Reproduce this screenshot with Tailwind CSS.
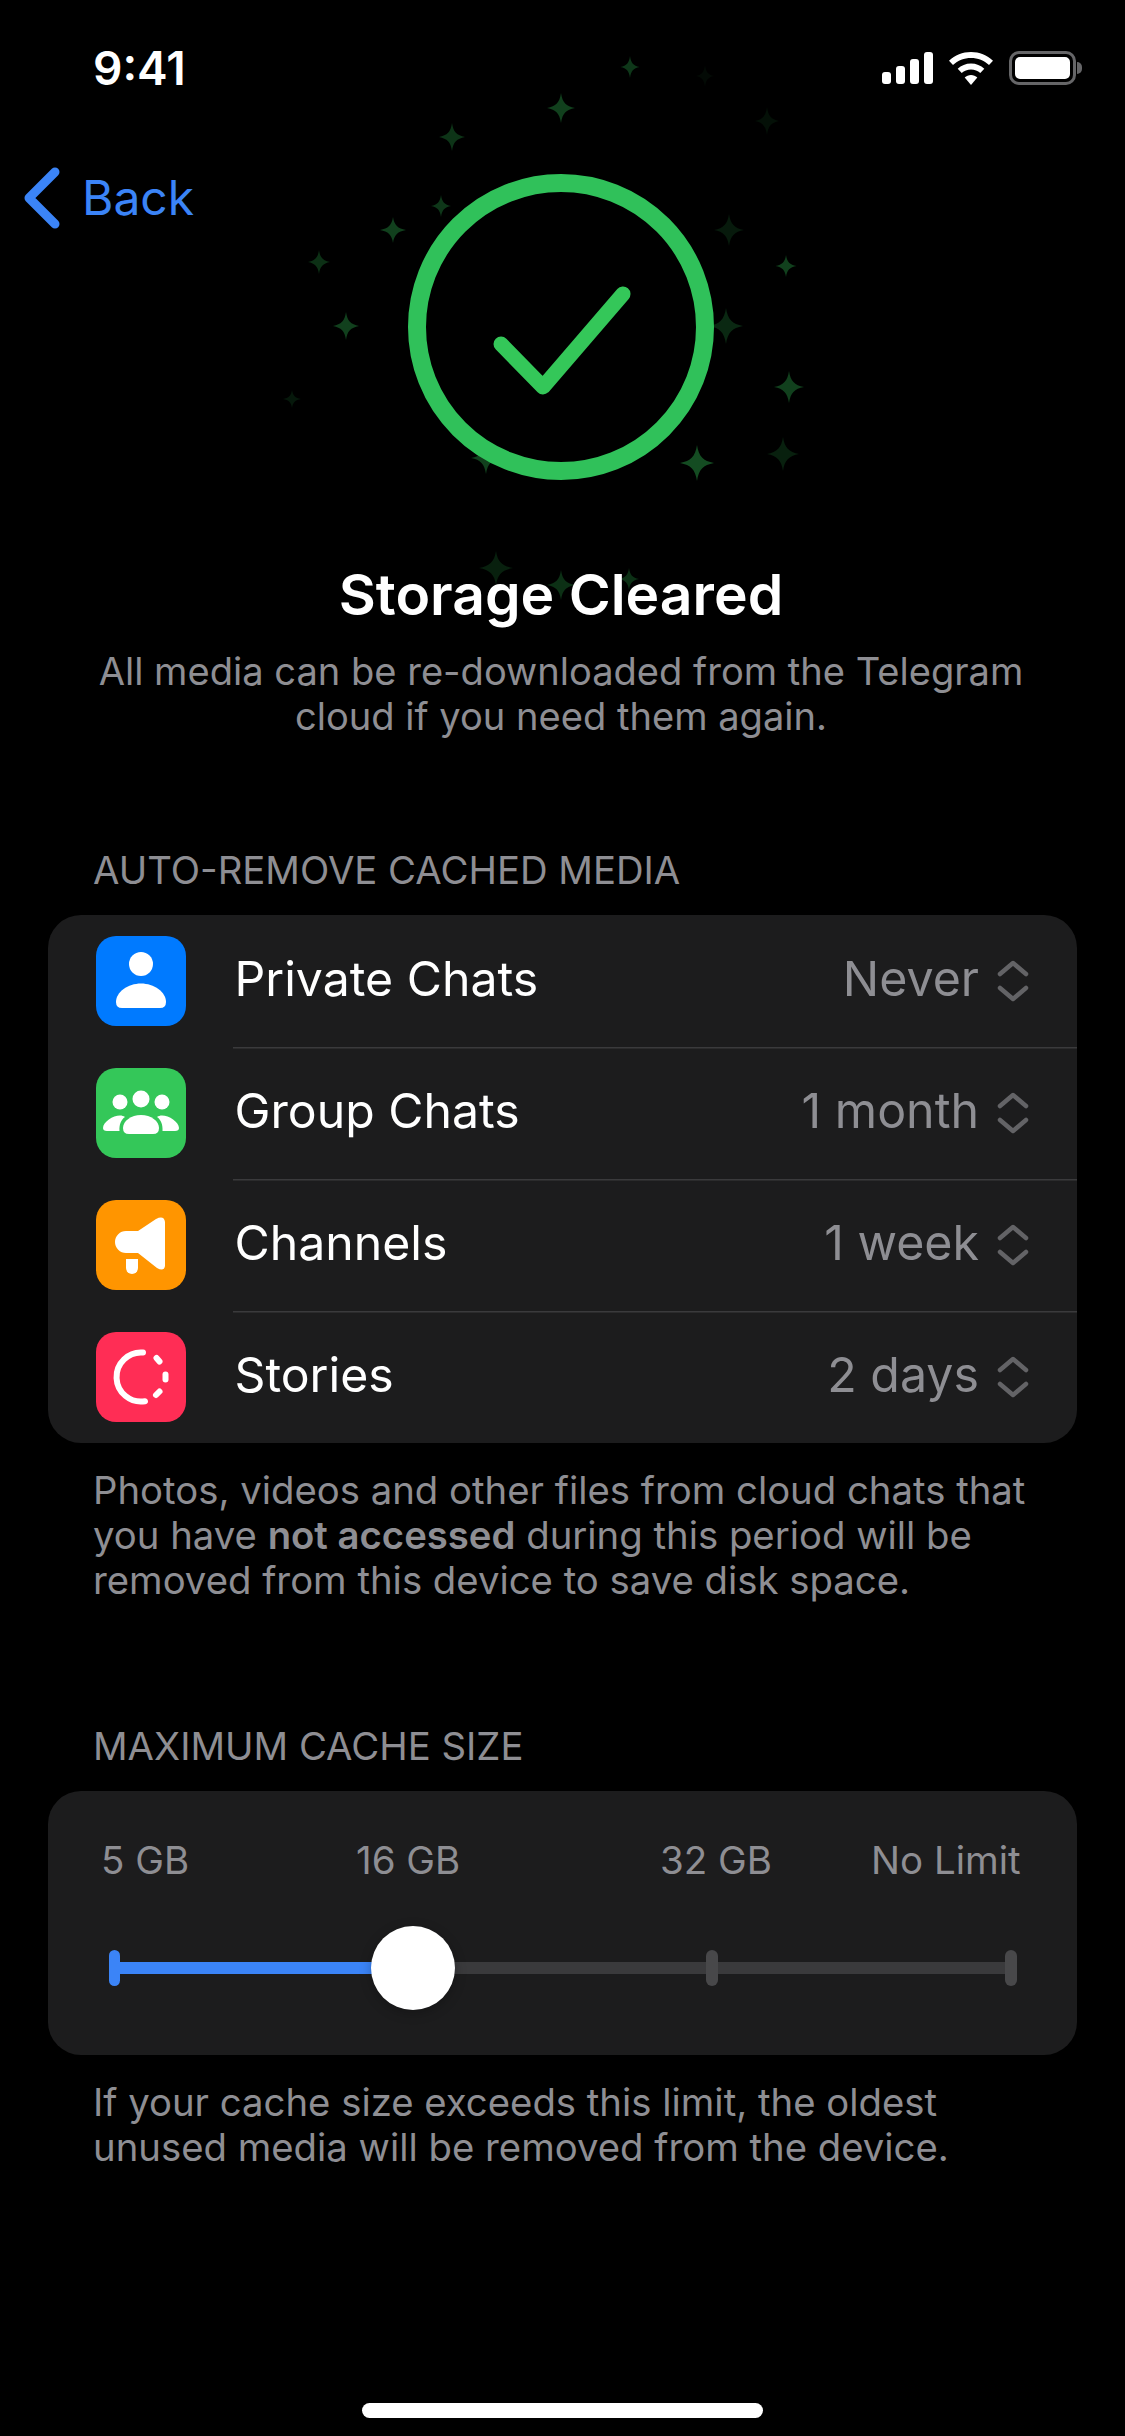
<!DOCTYPE html>
<html lang="en">
  <head>
    <meta charset="UTF-8" />
    <meta name="viewport" content="width=device-width, initial-scale=1.0" />
    <title>Storage Cleared</title>
    <script src="https://cdn.jsdelivr.net/npm/@tailwindcss/browser@4"></script>
  </head>
  <body class="bg-black text-white font-['Inter',sans-serif] w-[1125px] h-[2436px] overflow-hidden">
    <div class="relative flex flex-col h-[2436px]">
      <!-- stars and ring sit behind the header -->
      <svg class="absolute left-0 top-0" width="1125" height="640" viewBox="0 0 1125 640">
        <defs>
          <path id="star" d="M0 -1 C.1 -.36 .36 -.12 1 0 C.36 .12 .1 .36 0 1 C-.1 .36 -.36 .12 -1 0 C-.36 -.12 -.1 -.36 0 -1Z" />
        </defs>
        <g fill="#34c759">
          <use href="#star" transform="translate(630 67) scale(9.5 11)" opacity=".28" />
          <use href="#star" transform="translate(705 76) scale(9 11)" opacity=".05" />
          <use href="#star" transform="translate(561 108) scale(14 15)" opacity=".32" />
          <use href="#star" transform="translate(767 121) scale(12 14)" opacity=".08" />
          <use href="#star" transform="translate(452 137) scale(13 14)" opacity=".26" />
          <use href="#star" transform="translate(441 206) scale(10 11)" opacity=".28" />
          <use href="#star" transform="translate(393 230) scale(13 13)" opacity=".32" />
          <use href="#star" transform="translate(729 230) scale(15 16)" opacity=".13" />
          <use href="#star" transform="translate(319 262) scale(11 12)" opacity=".24" />
          <use href="#star" transform="translate(786 266) scale(10.5 11)" opacity=".32" />
          <use href="#star" transform="translate(346 326) scale(13 14)" opacity=".32" />
          <use href="#star" transform="translate(726 326) scale(17 18)" opacity=".2" />
          <use href="#star" transform="translate(292 399) scale(9 9)" opacity=".12" />
          <use href="#star" transform="translate(789 387) scale(15 16)" opacity=".32" />
          <use href="#star" transform="translate(783 454) scale(16 17)" opacity=".16" />
          <use href="#star" transform="translate(697 463) scale(17 18)" opacity=".38" />
          <use href="#star" transform="translate(486 458) scale(15 16)" opacity=".32" />
          <use href="#star" transform="translate(496 568) scale(17 17)" opacity=".16" />
          <use href="#star" transform="translate(561 585) scale(14 15)" opacity=".24" />
          <use href="#star" transform="translate(629 579) scale(10 11)" opacity=".24" />
        </g>
        <circle cx="561" cy="327" r="144" fill="#000" stroke="#30c15a" stroke-width="18" />
        <path d="M501 344 L543 387 L623 294" fill="none" stroke="#34c759" stroke-width="15" stroke-linecap="round" stroke-linejoin="round" />
      </svg>

      <div class="relative flex items-center justify-between h-[136px] pl-[93px] pr-[43px]">
        <span class="text-[46px] font-semibold leading-none">9:41</span>
        <div class="flex items-center gap-[16px]">
          <svg width="51" height="32" viewBox="0 0 51 32" fill="#fff">
            <rect x="0" y="20" width="9" height="12" rx="3" />
            <rect x="14" y="14" width="9" height="18" rx="3" />
            <rect x="28" y="7" width="9" height="25" rx="3" />
            <rect x="42" y="0" width="9" height="32" rx="3" />
          </svg>
          <svg width="44" height="33" viewBox="0 0 44 33" fill="#fff">
            <path d="M22 0 C30.500 0 38 3.200 44 8.800 L40 13 C35.200 8.600 28.900 6 22 6 C15.100 6 8.800 8.600 4 13 L0 8.800 C6 3.200 13.500 0 22 0Z" />
            <path d="M22 11.500 C27.200 11.500 31.800 13.500 35.300 16.800 L31.300 21 C28.800 18.700 25.600 17.400 22 17.400 C18.400 17.400 15.200 18.700 12.700 21 L8.700 16.800 C12.200 13.500 16.800 11.500 22 11.500Z" />
            <path d="M22 23 C24.400 23 26.600 23.900 28.300 25.500 L22 33 L15.700 25.500 C17.400 23.900 19.600 23 22 23Z" />
          </svg>
          <div class="flex items-center gap-[1px]">
            <div class="w-[67px] h-[34px] rounded-[10px] border-[3px] border-[#666668] p-[3px]">
              <div class="w-full h-full rounded-[5px] bg-white"></div>
            </div>
            <div class="w-[5px] h-[12px] rounded-r-full bg-[#666668]"></div>
          </div>
        </div>
      </div>

      <div class="relative flex items-center gap-[22px] h-[124px] pl-[24px]">
        <svg width="36" height="62" viewBox="0 0 36 62" fill="none">
          <path d="M31 5 L5 31 L31 57" stroke="#3b84f7" stroke-width="9" stroke-linecap="round" stroke-linejoin="round" />
        </svg>
        <span class="text-[48px] leading-none text-[#3b84f7]">Back</span>
      </div>

      <div class="relative mt-[299px] pr-[3px] text-center">
        <h1 class="text-[57px] leading-[72px] font-semibold">Storage Cleared</h1>
        <p class="mt-[18px] text-[38.100px] leading-[45px] text-[#8e8e93]">
          All media can be re-downloaded from the Telegram<br />cloud if you need them again.
        </p>
      </div>

      <div class="relative mt-[108px] pl-[93px] text-[38.300px] leading-[46px] text-[#8e8e93]">AUTO-REMOVE CACHED MEDIA</div>

      <div class="relative mt-[22px] mx-[48px] rounded-[33px] bg-[#1c1c1d]">
        <div class="flex items-center h-[132px] pl-[48px] pr-[48px]">
          <div class="flex items-center justify-center shrink-0 w-[90px] h-[90px] rounded-[20px] bg-[#007aff]">
            <svg width="90" height="90" viewBox="0 0 90 90" fill="#fff">
              <circle cx="45" cy="28" r="12" />
              <path d="M45 47.500 C58 47.500 70 56 70 66 Q70 72 64 72 H26 Q20 72 20 66 C20 56 32 47.500 45 47.500Z" />
            </svg>
          </div>
          <div class="flex items-center flex-1 h-full ml-[47px] -mr-[48px] pr-[48px] shadow-[0_1.5px_0_#3a3a3c]">
            <span class="flex-1 -mt-[3px] ml-[1.500px] text-[48.200px] leading-none">Private Chats</span>
            <span class="-mt-[3px] text-[48.300px] leading-none text-[#8e8e93]">Never</span>
            <svg class="ml-[18px]" width="32" height="44" viewBox="0 0 32 44" fill="none" stroke="#636366" stroke-width="4.500" stroke-linecap="round" stroke-linejoin="round">
              <path d="M3 15 L16 4 L29 15" />
              <path d="M3 29 L16 40 L29 29" />
            </svg>
          </div>
        </div>
        <div class="flex items-center h-[132px] pl-[48px] pr-[48px]">
          <div class="flex items-center justify-center shrink-0 w-[90px] h-[90px] rounded-[20px] bg-[#34c759]">
            <svg width="90" height="90" viewBox="0 0 90 90" fill="#fff">
              <circle cx="45" cy="31" r="8.500" />
              <circle cx="24" cy="34" r="7.500" />
              <circle cx="66" cy="34" r="7.500" />
              <path d="M45 47 C55 47 63 53 63 60 Q63 66 57 66 H33 Q27 66 27 60 C27 53 35 47 45 47Z" />
              <path d="M24 47.500 C17 47.500 7 54 7 60 Q7 63 11 63 H23.500 C23 57 25 51.500 29 49 C27.500 48 26 47.500 24 47.500Z" />
              <path d="M66 47.500 C73 47.500 83 54 83 60 Q83 63 79 63 H66.500 C67 57 65 51.500 61 49 C62.500 48 64 47.500 66 47.500Z" />
            </svg>
          </div>
          <div class="flex items-center flex-1 h-full ml-[47px] -mr-[48px] pr-[48px] shadow-[0_1.5px_0_#3a3a3c]">
            <span class="flex-1 -mt-[3px] ml-[1.500px] text-[48.200px] leading-none">Group Chats</span>
            <span class="-mt-[3px] text-[48.300px] leading-none text-[#8e8e93]">1 month</span>
            <svg class="ml-[18px]" width="32" height="44" viewBox="0 0 32 44" fill="none" stroke="#636366" stroke-width="4.500" stroke-linecap="round" stroke-linejoin="round">
              <path d="M3 15 L16 4 L29 15" />
              <path d="M3 29 L16 40 L29 29" />
            </svg>
          </div>
        </div>
        <div class="flex items-center h-[132px] pl-[48px] pr-[48px]">
          <div class="flex items-center justify-center shrink-0 w-[90px] h-[90px] rounded-[20px] bg-[#ff9500]">
            <svg width="90" height="90" viewBox="0 0 90 90" fill="#fff">
              <path d="M30 31 H42 L60 19 Q68 15 69 22 V66 Q68 72 61 68 L42 53 H30 A11 11 0 0 1 30 31Z" />
              <path d="M30 59 H42 V68 A6 6 0 0 1 30 68Z" />
            </svg>
          </div>
          <div class="flex items-center flex-1 h-full ml-[47px] -mr-[48px] pr-[48px] shadow-[0_1.5px_0_#3a3a3c]">
            <span class="flex-1 -mt-[3px] ml-[1.500px] text-[48.200px] leading-none">Channels</span>
            <span class="-mt-[3px] text-[48.300px] leading-none text-[#8e8e93]">1 week</span>
            <svg class="ml-[18px]" width="32" height="44" viewBox="0 0 32 44" fill="none" stroke="#636366" stroke-width="4.500" stroke-linecap="round" stroke-linejoin="round">
              <path d="M3 15 L16 4 L29 15" />
              <path d="M3 29 L16 40 L29 29" />
            </svg>
          </div>
        </div>
        <div class="flex items-center h-[132px] pl-[48px] pr-[48px]">
          <div class="flex items-center justify-center shrink-0 w-[90px] h-[90px] rounded-[20px] bg-[#ff2d55]">
            <svg width="90" height="90" viewBox="0 0 90 90" fill="none" stroke="#fff" stroke-width="6" stroke-linecap="round">
              <path d="M47 20.600 A24.500 24.500 0 1 0 49 69.200" />
              <path d="M60.500 26 L63.500 29.500" />
              <path d="M69.500 42.500 V47.500" />
              <path d="M63.500 59.500 L60 63" />
            </svg>
          </div>
          <div class="flex items-center flex-1 h-full ml-[47px]">
            <span class="flex-1 -mt-[3px] ml-[1.500px] text-[48.200px] leading-none">Stories</span>
            <span class="-mt-[3px] text-[48.300px] leading-none text-[#8e8e93]">2 days</span>
            <svg class="ml-[18px]" width="32" height="44" viewBox="0 0 32 44" fill="none" stroke="#636366" stroke-width="4.500" stroke-linecap="round" stroke-linejoin="round">
              <path d="M3 15 L16 4 L29 15" />
              <path d="M3 29 L16 40 L29 29" />
            </svg>
          </div>
        </div>
      </div>

      <p class="relative mt-[25px] pl-[93px] text-[38.300px] leading-[45px] text-[#8e8e93]">
        Photos, videos and other files from cloud chats that<br />
        you have <b class="font-semibold">not accessed</b> during this period will be<br />
        removed from this device to save disk space.
      </p>

      <div class="relative mt-[120px] pl-[93px] text-[38.300px] leading-[46px] text-[#8e8e93]">MAXIMUM CACHE SIZE</div>

      <div class="relative mt-[22px] mx-[48px] h-[264px] rounded-[33px] bg-[#1c1c1d] pt-[46px]">
        <div class="flex pl-[53px] text-[38.500px] leading-[46px] text-[#8e8e93]">
          <span class="w-[85px] whitespace-nowrap">5 GB</span>
          <span class="ml-[170px] w-[105px] whitespace-nowrap">16 GB</span>
          <span class="ml-[199px] w-[109px] whitespace-nowrap">32 GB</span>
          <span class="ml-[102px] whitespace-nowrap">No Limit</span>
        </div>
        <div class="relative mt-[79px] ml-[61px] w-[908px] h-[12px] bg-[#3a3a3c]">
          <div class="w-[304px] h-full bg-[#3b84f7]"></div>
          <div class="absolute left-0 top-[-12px] w-[11px] h-[36px] rounded-full bg-[#3b84f7]"></div>
          <div class="absolute left-[597px] top-[-12px] w-[12px] h-[36px] rounded-full bg-[#48484a]"></div>
          <div class="absolute left-[896px] top-[-12px] w-[12px] h-[36px] rounded-full bg-[#48484a]"></div>
          <div class="absolute left-[262px] top-[-36px] w-[84px] h-[84px] rounded-full bg-white shadow-[0_3px_12px_rgba(0,0,0,0.25)]"></div>
        </div>
      </div>

      <p class="relative mt-[25px] pl-[93px] text-[38.300px] leading-[45px] text-[#8e8e93]">
        If your cache size exceeds this limit, the oldest<br />
        unused media will be removed from the device.
      </p>

      <div class="relative mt-[233px] mx-auto w-[401px] h-[15px] rounded-full bg-white"></div>
    </div>
  </body>
</html>
